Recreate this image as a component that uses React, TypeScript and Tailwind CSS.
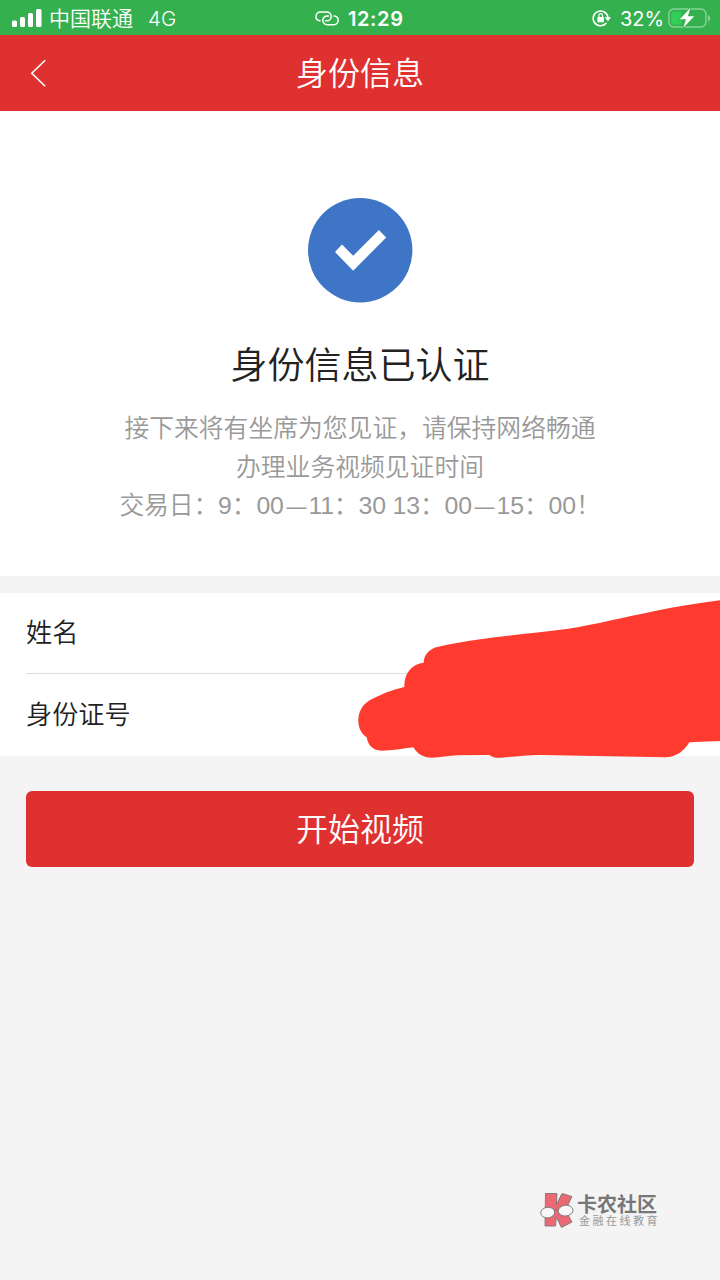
import React from "react";

// --------- Status bar icons ---------------
const SignalIcon = () => (
    <svg className="w-[30px] h-[20px]" viewBox="0 0 30 20" fill="white">
        <rect x="0" y="12.5" width="5" height="6.5" rx="1.5" />
        <rect x="8" y="9" width="5" height="10" rx="1.5" />
        <rect x="16" y="5" width="5" height="14" rx="1.5" />
        <rect x="24" y="1" width="5.5" height="18" rx="1.5" />
    </svg>
);

const HotspotIcon = () => (
    <svg className="mt-[2px] w-[24px] h-[15px]" viewBox="0 0 24 15" fill="none" stroke="white" strokeWidth="1.5" strokeLinecap="round">
        <path d="M5 9.7C2.4 9.4 1 7.4 1 5.4C1 2.9 2.9 1.1 5.4 1.1H11.6C14.2 1.1 16.2 3 16.2 5.4C16.2 7.8 14.4 9.8 11.8 9.8H10.4" />
        <path d="M19 5.1C21.7 5.4 23.2 7.2 23.2 9.3C23.2 11.8 21.3 13.7 18.8 13.7H12.4C9.8 13.7 7.8 11.8 7.8 9.3C7.8 6.9 9.6 5 12.2 5H13.4" />
    </svg>
);

const RotationLockIcon = () => (
    <svg className="w-[20px] h-[18px]" viewBox="0 0 20 18" fill="none" stroke="white">
        <path d="M14 14.4A7.4 7.4 0 1 1 15.9 8.4" strokeWidth="1.6" strokeLinecap="round" />
        <path d="M12.6 8.2H19.2L15.9 12.2Z" fill="white" stroke="none" />
        <rect x="5.4" y="8" width="6.6" height="5.2" rx="0.8" fill="white" stroke="none" />
        <path d="M6.9 8V6.4A1.8 1.8 0 0 1 10.5 6.4V8" strokeWidth="1.2" />
    </svg>
);

const BatteryIcon = () => (
    <svg className="w-[44px] h-[22px]" viewBox="0 0 44 22">
        <rect x="1.9" y="2" width="37" height="18" rx="5" fill="none" stroke="#86d296" strokeWidth="1.4" />
        <path d="M40.9 8V14.4C42.4 13.8 43.2 12.6 43.2 11.2S42.4 8.6 40.9 8Z" fill="#86d296" />
        <path d="M7 4.4H14.5V17.8H7Q4.2 17.8 4.2 14.8V7.4Q4.2 4.4 7 4.4Z" fill="#33cd5a" />
        <path d="M23.5 0.8L12.8 12.3H19L16.3 20.8L27.2 9.3H20.9Z" fill="white" stroke="#35b04f" strokeWidth="1.6" paintOrder="stroke" />
    </svg>
);

const StatusBar = () => (
    <div className="relative h-[35px] bg-[#35b04f] text-white flex items-center justify-between pl-3 pr-[9px] font-['Inter','Noto_Sans_CJK_SC',sans-serif]">
        <div className="flex items-center text-[21px] leading-[35px] font-[350]">
            <SignalIcon />
            <span className="ml-[7px] pt-[2px]">中国联通</span>
            <span className="ml-[15px] pt-[2px] text-[20.5px]">4G</span>
        </div>
        <div className="absolute left-[315px] top-0 h-full flex items-center">
            <HotspotIcon />
            <span className="ml-[9px] pt-[3px] text-[20px] leading-[33px] font-semibold tracking-[0.6px]">12:29</span>
        </div>
        <div className="flex items-center">
            <RotationLockIcon />
            <span className="ml-[8px] pt-[3px] w-[47px] text-[20px] leading-[33px] whitespace-nowrap">32%</span>
            <BatteryIcon />
        </div>
    </div>
);

// --------------------------------------------------------------------------------------------------------
const Header = () => (
    <header className="relative h-[76px] bg-[#e03131] flex items-center justify-center">
        <svg className="absolute left-[30px] top-[24px] w-[17px] h-[28px]" viewBox="0 0 17 28" fill="none" stroke="white" strokeWidth="1.6">
            <path d="M15.2 1.2L1.8 14.2L15.2 27.2" />
        </svg>
        <h1 className="pt-px text-[32px] leading-[76px] font-[350] text-white">身份信息</h1>
    </header>
);

const Result = () => (
    <section className="h-[465px] bg-white flex flex-col items-center pt-[87px]">
        <svg className="w-[105px] h-[105px]" viewBox="0 0 105 105">
            <circle cx="52.2" cy="52.2" r="52.2" fill="#3e75c6" />
            <path d="M27 54L34 46.5L45.2 57.7L70.9 32L78.2 39.5L45.2 72.7Z" fill="white" />
        </svg>
        <h2 className="mt-[37px] text-[37px] leading-[54px] font-[350] text-[#222]">身份信息已认证</h2>
        <div className="mt-[16px] text-[24.8px] leading-[38.5px] font-[350] text-[#999] text-center whitespace-nowrap">
            <p>接下来将有坐席为您见证，请保持网络畅通</p>
            <p>办理业务视频见证时间</p>
            <p className="tracking-[-0.13px]">
                交易日：9：00<span className="inline-block scale-x-80">—</span>11：30 13：00<span className="inline-block scale-x-80">—</span>15：00！
            </p>
        </div>
    </section>
);

// --------------------------------------------------------------------------------------------------------
const Scribble = () => (
    <svg className="absolute right-0 -top-[3px] w-[380px] h-[180px]" viewBox="0 0 1140 540" fill="#ff3b30">
        <path d="M1140 31C1075 40 1010 50 945 63C850 82 770 103 680 117C590 129 500 136 410 149C370 155 330 162 295 170C268 175 251 195 251 218C217 222 192 248 193 291C155 300 120 314 90 330C65 345 54 368 55 395C56 415 65 432 80 442C84 467 100 482 124 482C155 482 190 476 220 472C232 492 250 503 275 503C300 502 325 498 355 496L448 495C458 503 470 504 485 503C520 500 560 496 600 495L975 502C1010 502 1035 480 1048 457L1140 453Z" />
    </svg>
);

const InfoList = () => (
    <section className="relative mt-[17px] h-[163px] bg-white pl-[26px] text-[26.2px] font-[350] text-[#222]">
        <div className="h-[81px] leading-[81px] border-b border-[#dcdcdc]">姓名</div>
        <div className="h-[82px] leading-[83px]">身份证号</div>
        <Scribble />
    </section>
);

// K wearing a pair of glasses, with the community name beside it
const Watermark = () => (
    <div className="absolute left-[540px] top-[1190px] flex items-start">
        <svg className="w-[34px] h-[40px]" viewBox="0 0 34 40" stroke="#777" strokeWidth="0.9" strokeLinejoin="round">
            <path d="M5.5 3.5H17L16.4 14.5L22 3.5L32 6.5L25.5 20L32 32L21.5 37.5L16.2 27L15.6 36H5Z" fill="#ec6874" />
            <ellipse cx="7.7" cy="22.6" rx="7" ry="5.3" transform="rotate(-6 7.7 22.6)" fill="#f8f8f8" />
            <ellipse cx="25.6" cy="20.6" rx="7.4" ry="5.4" transform="rotate(-6 25.6 20.6)" fill="#f8f8f8" />
            <path d="M14.2 20.6Q16.2 18.4 18.4 20" fill="none" />
        </svg>
        <div className="ml-[3px]">
            <div className="pt-px text-[20px] leading-[28px] font-bold text-[#777]">卡农社区</div>
            <div className="ml-[2px] text-[11px] leading-[12px] -mt-[4px] tracking-[2.5px] text-[#999] whitespace-nowrap">金融在线教育</div>
        </div>
    </div>
);

const App: React.FC = () => {
    return (
        <div className="relative w-[720px] h-[1280px] overflow-hidden bg-[#f4f4f4] font-['Liberation_Sans','Noto_Sans_CJK_SC',sans-serif]">
            <StatusBar />
            <Header />
            <Result />
            <InfoList />
            <div className="px-[26px] pt-[35px]">
                <button className="w-full h-[76px] rounded-md bg-[#e03131] text-white text-[32px] leading-[78px] font-[350]">开始视频</button>
            </div>
            <Watermark />
        </div>
    );
};

export default App;
